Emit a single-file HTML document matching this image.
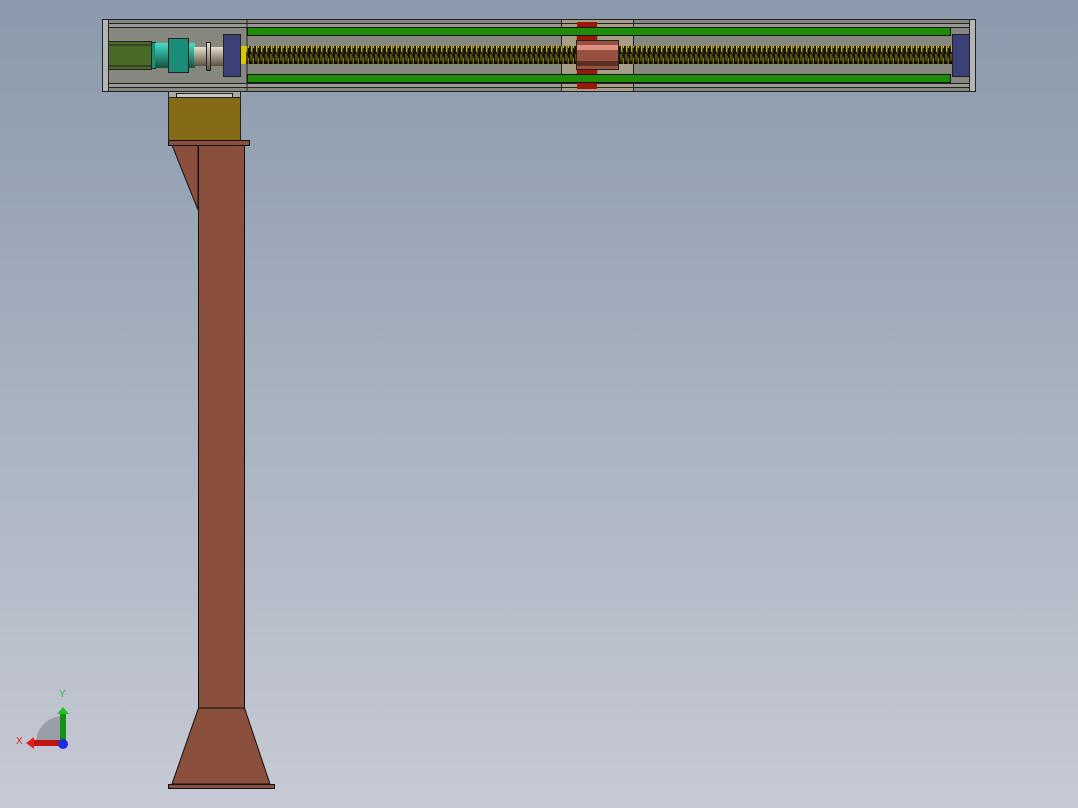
<!DOCTYPE html>
<html><head><style>
html,body{margin:0;padding:0;width:1078px;height:808px;overflow:hidden;background:linear-gradient(#8a99ac,#c6cad4);}
svg{display:block}
</style></head><body>
<svg width="1078" height="808" viewBox="0 0 1078 808" xmlns="http://www.w3.org/2000/svg">
<defs>
<pattern id="thr" width="5" height="18" patternUnits="userSpaceOnUse">
<rect width="5" height="18" fill="#1e1c08"/>
<path d="M1 0 L1 7 M3.5 4 L3.5 12 M1.5 10 L1.5 16" stroke="#d8c418" stroke-width="1"/>
<path d="M2.5 2 L2.5 18" stroke="#6a6020" stroke-width="1"/>
</pattern>
<linearGradient id="teal" x1="0" y1="0" x2="0" y2="1"><stop offset="0" stop-color="#3ee0c8"/><stop offset="1" stop-color="#145040"/></linearGradient>
<linearGradient id="shaft" x1="0" y1="0" x2="0" y2="1"><stop offset="0" stop-color="#e8e0cc"/><stop offset="1" stop-color="#5a5040"/></linearGradient>
<linearGradient id="scr" x1="0" y1="0" x2="0" y2="1"><stop offset="0" stop-color="#000" stop-opacity="0"/><stop offset="1" stop-color="#000" stop-opacity="0.5"/></linearGradient>
</defs>
<rect x="102.5" y="19.5" width="873" height="72" fill="#868880" stroke="#222" />
<rect x="561.5" y="19.5" width="72" height="72" fill="#a89e88" stroke="#222"/>
<rect x="576" y="28" width="22" height="54" fill="#868880"/>
<rect x="108.5" y="23.5" width="861" height="4" fill="#9a9a94" stroke="#222"/>
<rect x="108.5" y="83.5" width="861" height="4" fill="#9a9a94" stroke="#222"/>
<rect x="561.5" y="23.5" width="72" height="4" fill="#a89e88" stroke="#222"/>
<rect x="561.5" y="83.5" width="72" height="4" fill="#a89e88" stroke="#222"/>
<rect x="102.5" y="19.5" width="6" height="72" fill="#b4b4b4" stroke="#222"/>
<rect x="969.5" y="19.5" width="6" height="72" fill="#b4b4b4" stroke="#222"/>
<line x1="247" y1="19" x2="247" y2="91" stroke="#222"/>
<rect x="577" y="22" width="20" height="6" fill="#9a1808"/>
<rect x="577" y="83" width="20" height="6" fill="#9a1808"/>
<rect x="577" y="36" width="20" height="40" fill="#9a1808"/>
<rect x="247.5" y="27.5" width="703" height="8" fill="#1e8c06" stroke="#111"/>
<rect x="247.5" y="74.5" width="703" height="8" fill="#1e8c06" stroke="#111"/>
<rect x="240" y="46" width="712" height="18" fill="url(#thr)"/>
<rect x="240" y="46" width="712" height="18" fill="url(#scr)"/>
<rect x="240" y="46" width="6" height="18" fill="#d8c800"/>
<rect x="576.5" y="40.5" width="42" height="29" fill="#985040" stroke="#222"/>
<rect x="577" y="45" width="41" height="5" fill="#e09080"/>
<rect x="577" y="61" width="41" height="5" fill="#5a3020"/>
<rect x="108.5" y="41.5" width="43" height="28" fill="#4a6a28" stroke="#222"/>
<line x1="108" y1="45" x2="151" y2="45" stroke="#222"/>
<line x1="108" y1="66" x2="151" y2="66" stroke="#222"/>
<rect x="151.5" y="42.5" width="4" height="26" fill="#1a9078" stroke="#222"/>
<rect x="155" y="43" width="40" height="25" fill="url(#teal)"/>
<rect x="168.5" y="38.5" width="20" height="34" fill="#1a8c78" stroke="#222"/>
<rect x="194" y="47" width="29" height="19" fill="url(#shaft)"/>
<rect x="206.5" y="42.5" width="4" height="28" fill="url(#shaft)" stroke="#222"/>
<rect x="223.5" y="34.5" width="17" height="42" fill="#3c4278" stroke="#222"/>
<rect x="952.5" y="34.5" width="17" height="42" fill="#3c4278" stroke="#222"/>
<rect x="168.5" y="91.5" width="72" height="6" fill="#a8a8a8" stroke="#222"/>
<rect x="176.5" y="93.5" width="56" height="4" fill="#c8c8c8" stroke="#222"/>
<rect x="168.5" y="97.5" width="72" height="43" fill="#856b18" stroke="#222"/>
<polygon points="172,145 198,145 198,210" fill="#8b4f3e" stroke="#111"/>
<rect x="168.5" y="140.5" width="81" height="5" fill="#8b4f3e" stroke="#111"/>
<rect x="198.5" y="145.5" width="46" height="563" fill="#8b4f3e" stroke="#111"/>
<polygon points="198.5,708 244.5,708 270,784 172,784" fill="#8b4f3e" stroke="#111"/>
<rect x="168.5" y="784.5" width="106" height="4" fill="#8b4f3e" stroke="#111"/>
<path d="M36 743 A27 27 0 0 1 63 716 L63 743 Z" fill="#9a9ea6"/>
<rect x="60" y="713" width="6" height="30" fill="#149014"/>
<polygon points="57,714 69,714 63,707" fill="#20c020"/>
<rect x="33" y="740" width="30" height="6" fill="#c01414"/>
<polygon points="34,737 34,749 26,743" fill="#e02020"/>
<circle cx="63" cy="744" r="5" fill="#1c2ce0"/>
<text x="59" y="697" font-family="Liberation Sans, sans-serif" font-size="10" fill="#20c020">Y</text>
<text x="16" y="744" font-family="Liberation Sans, sans-serif" font-size="10" fill="#e02020">X</text>
</svg>
</body></html>
